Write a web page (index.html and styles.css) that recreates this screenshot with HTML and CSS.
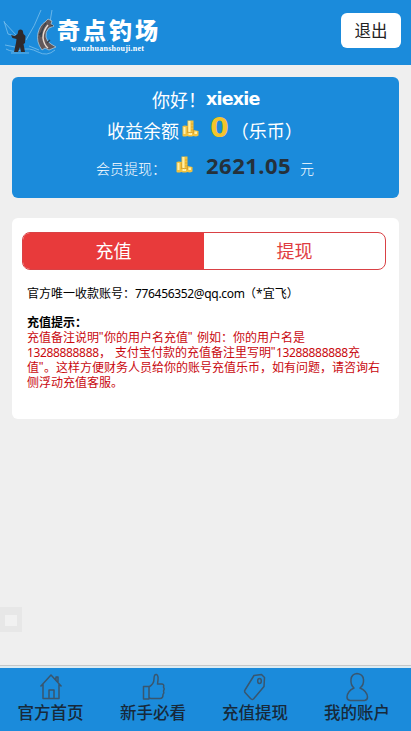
FILE: index.html
```html
<!DOCTYPE html>
<html lang="zh-CN">
<head>
<meta charset="utf-8">
<meta name="viewport" content="width=device-width">
<title>奇点钓场</title>
<link rel="stylesheet" href="styles.css">
</head>
<body>
<svg class="defs" width="0" height="0">
  <symbol id="coins" viewBox="0 0 17 17">
    <path fill="#f2c23e" d="M5.500.5H11.500V10L16.500 11V15.500Q14 17 11.500 16Q8 17 5.500 16Q2 17 .5 16V6Q3 5 5.500 6Z"/>
    <path fill="#fff0a8" d="M6.300 1h2.200V12H6.300zM1.500 7h2V14h-2zM12.500 11.500h2.500v2.500h-2.500zM6.500 13h3.500v2H6.500z"/>
    <path fill="none" stroke="#c68d21" stroke-width=".5" d="M5.500 6.500v6.500M11.500 9v5M5.500 12q3 1.500 6 0M9 4h2.500M9 7h2.500M9 10h2.500"/>
  </symbol>
</svg>
<header class="top">
  <div class="brand">
    <svg class="anglers" viewBox="0 0 54 48" fill="none">
      <path stroke="#7cc0ec" stroke-width=".8" d="M1 14 13 27M1 13 5 26 12 28M38 2Q32 18 23 32M49 2 47 14M3 41Q10 45 18 42T35 44T52 42M2 37 12 39M26 38 36 42M8 45h18"/>
      <path fill="#2f292b" d="M15 24q0-2.500 2.500-2.500T20 24l.5 2 2 2-.5 7-1.500 1 1.500 8h-4l-1-5-2 5h-4l2-9 .5-4-4-1-1.500-3 4 1 2.500-2z"/>
      <path fill="#62585a" stroke="#b9d3e2" stroke-width=".7" d="m45 11 4 2-1 3 3 2-5 2q-4 4-3 9 1 5 5 7l5 3-7 3-4-2-3 2q-6-8-4-17 2-8 7-11z"/>
      <path stroke="#e9dcd2" stroke-width="1.500" d="M45 17q-5 6-5 13 1 7 5 10"/>
      <path stroke="#35404b" stroke-width="1.200" d="M43 15q-5 7-5 14M39 24l-3 3M48 17l2 1M44 35l3-3"/>
    </svg>
    <div class="wordmark"><b>奇点钓场</b><span>wanzhuanshouji.net</span></div>
  </div>
  <a class="logout">退出</a>
</header>
<main>
  <section class="summary">
    <p class="hello"><span>你好！</span><b>xiexie</b></p>
    <p class="balance"><span>收益余额</span><svg class="coin"><use href="#coins"/></svg><b>0</b><span class="unit">（乐币）</span></p>
    <p class="cash"><span class="label">会员提现：</span><svg class="coin"><use href="#coins"/></svg><b>2621.05</b><span>元</span></p>
  </section>
  <section class="card">
    <div class="tabs"><a class="active">充值</a><a>提现</a></div>
    <p class="account"><span>官方唯一收款账号：</span><span class="mail">776456352@qq.com</span><span class="owner">（*宜飞）</span></p>
    <div class="tips">
      <b>充值提示：</b>
      <p>充值备注说明<i class="q">"</i>你的用户名充值<i class="q wide">"</i>例如：你的用户名是</p>
      <p><span class="num">13288888888</span>，<span class="gap"></span>支付宝付款的充值备注里写明<i class="q">"</i><span class="num">13288888888</span>充</p>
      <p>值<i class="q">"</i>。这样方便财务人员给你的账号充值乐币，如有问题，请咨询右</p>
      <p>侧浮动充值客服。</p>
    </div>
  </section>
</main>
<div class="float"></div>
<nav class="bottom">
  <a><svg viewBox="0 0 30 30"><path d="M4.500 14.500 15 3l10.500 11.500M7 12v14.500h16V12M13 26v-8h5v8M20 8V5h2v5"/></svg><span>官方首页</span></a>
  <a><svg viewBox="0 0 30 30"><path d="M5.500 14.500h5.500V27H5.500zM11 15q5-3 5-8 0-5 2.500-4.500Q21 3 19.500 12h4.500q2.500.5 1.500 3 1.500 2 0 4 1 2-.5 3.500 0 4-3 4H13q-2 0-2-2"/></svg><span>新手必看</span></a>
  <a><svg viewBox="0 0 30 30"><path d="m14 3.500 7.500-1 3 3-.5 9L13.500 27Q12 28 10.500 26.500L5.500 21q-1.500-1.500-.5-3z"/><ellipse cx="19.500" cy="9" rx="1.800" ry="2.500"/></svg><span>充值提现</span></a>
  <a><svg viewBox="0 0 30 30"><path d="M12 16Q8.500 13 9 7.500 9.500 2 15 1.500q6 .5 6.500 6 .5 5.500-3.500 8.500 7 3 7.500 9 0 3-3 3.500H8q-3-.5-3-3.500.5-6 7-9z"/></svg><span>我的账户</span></a>
</nav>
</body>
</html>
```
FILE: styles.css
```css
* { box-sizing: border-box; }
body {
  margin: 0;
  height: 731px;
  display: flex;
  flex-direction: column;
  overflow: hidden;
  background: #efefef;
  color: #000;
  font-family: "Noto Sans", "Noto Sans CJK SC", sans-serif;
  white-space: nowrap;
  text-spacing-trim: space-all;
}
p { margin: 0; }
.defs { position: absolute; }
.top {
  height: 65px;
  background: #1b8bdb;
  display: flex;
  justify-content: space-between;
  padding: 8px 10px 0 3px;
}
.brand { display: flex; }
.anglers { width: 54px; height: 48px; }
.wordmark { color: #fff; padding-top: 6px; }
.wordmark b {
  display: block;
  font: 900 23px/31px "Noto Sans CJK SC", sans-serif;
  letter-spacing: 3px;
}
.wordmark span {
  display: block;
  margin: -1px 0 0 14px;
  font: bold 8px/9px "Liberation Serif", serif;
  letter-spacing: .25px;
}
.logout {
  width: 60px;
  height: 35px;
  margin-top: 5px;
  border-radius: 6px;
  background: #fff;
  color: #222;
  font-size: 16.500px;
  line-height: 36px;
  text-align: center;
}
main { flex: 1; padding: 12px 12px 0; }
.summary {
  height: 121px;
  border-radius: 6px;
  background: #1b8bdb;
  color: #fff;
}
.summary p { display: flex; align-items: center; }
.hello { height: 34px; padding: 9px 0 0 140px; font-size: 18px; }
.hello b { font: bold 17.500px "DejaVu Sans", sans-serif; letter-spacing: -.8px; }
.hello span { width: 54px; }
.balance { height: 38px; padding: 0 0 0 95px; font-size: 18px; }
.coin { width: 17px; height: 17px; }
.balance .coin { margin: -4px 0 0 3px; }
.balance b {
  margin: -5px 0 0 11px;
  color: #f3c42c;
  font: bold 27px "DejaVu Sans", sans-serif;
}
.balance .unit { margin-left: 2px; }
.cash { height: 34px; padding-left: 84px; font-size: 14px; }
.cash .label { width: 80px; margin-top: 3px; font-weight: 300; }
.cash .coin { margin-top: -3px; }
.cash b {
  width: 94px;
  margin: -3px 0 0 13px;
  color: #25313b;
  font: bold 22px "Noto Sans", sans-serif;
  letter-spacing: .5px;
}
.cash b + span { margin-top: 3px; font-weight: 300; }
.card {
  height: 201px;
  margin-top: 20px;
  padding: 14px 13px 0 10px;
  border-radius: 6px;
  background: #fff;
}
.tabs {
  display: flex;
  height: 38px;
  border: 1px solid #d94145;
  border-radius: 8px;
  overflow: hidden;
}
.tabs a {
  flex: 1;
  color: #df3c41;
  font-size: 18px;
  line-height: 37px;
  text-align: center;
}
.tabs .active { background: #e83a3b; color: #fff; }
.account { display: flex; align-items: center; height: 20px; margin: 13px 0 0 5px; font-size: 12px; }
.mail { width: 110px; letter-spacing: -.33px; font-size: 12px; }
.owner { margin-left: -1px; }
.tips { margin: 12px 0 0 5px; font-size: 12px; line-height: 15px; color: #c9090f; }
.tips b { display: block; color: #000; }
.tips p { height: 15px; display: flex; }
.q { width: 5px; font: 12px/15px "Liberation Sans", sans-serif; }
.q.wide { width: 9px; }
.gap { width: 4px; }
.num { width: 72px; font: 12px/15px "Noto Sans", sans-serif; letter-spacing: -.35px; }
.float {
  position: absolute;
  top: 607px;
  left: 0;
  width: 22px;
  height: 25px;
  border: 5px solid #e7e7e7;
  border-width: 8px 5px 6px;
  background: #f1f1f1;
}
.bottom {
  height: 65px;
  display: grid;
  grid-template-columns: repeat(4, 102px);
  padding: 4px 0 0;
  border-top: 2px solid #dcebf2;
  background: #1b8bdb;
  box-shadow: 0 -1px #c5c7c8;
}
.bottom a { display: flex; flex-direction: column; align-items: center; }
.bottom a:first-child { padding-right: 1px; }
.bottom svg {
  width: 30px;
  height: 30px;
  fill: none;
  stroke: #39566e;
  stroke-width: 1.500;
  stroke-linejoin: round;
}
.bottom span { color: #17293a; font-size: 16.500px; font-weight: 500; line-height: 20px; margin-top: 1px; }
```
